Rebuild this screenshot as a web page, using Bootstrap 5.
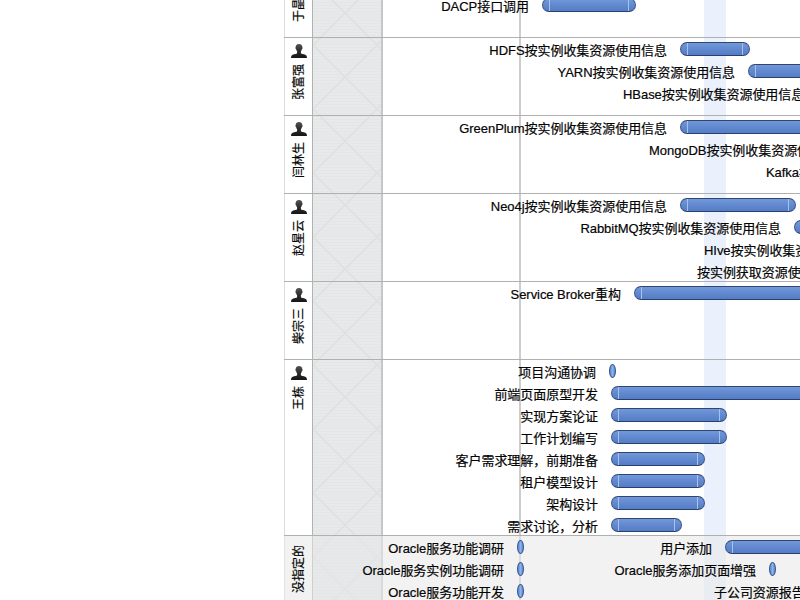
<!DOCTYPE html>
<html lang="zh-CN">
<head>
<meta charset="utf-8">
<meta name="viewport" content="width=device-width, initial-scale=1">
<title>资源甘特图</title>
<link href="https://cdn.jsdelivr.net/npm/bootstrap@5.3.0/dist/css/bootstrap.min.css" rel="stylesheet">
<style>
  body { width: 800px; height: 600px; background: #fff; color: #000; font: 13px/22px "Liberation Sans", "Noto Sans CJK SC", sans-serif; letter-spacing: -.05px; -webkit-text-stroke: .2px #111; }
  .gantt { width: 516px; height: 600px; margin-left: 284px; }
  /* column guides behind the rows */
  .guides { z-index: 0; }
  .g-names { width: 29px; border-left: 1px solid #dcdcdc; border-right: 1px solid #b2b2b2; }
  .g-off {
    width: 70px; border-right: 2px solid #c6c7c8;
    background:
      linear-gradient(45deg, transparent 48.5%, #dfe0e2 49.5%, #dfe0e2 50.5%, transparent 51.5%) 0 -19px / 64px 64px,
      linear-gradient(-45deg, transparent 48.5%, #dfe0e2 49.5%, #dfe0e2 50.5%, transparent 51.5%) 0 -19px / 64px 64px,
      repeating-linear-gradient(#e7e9ea 0 2px, #e3e5e6 2px 3px);
  }
  .g-line { width: 2px; margin-left: 136px; background: #cdcdcd; }
  .g-today { width: 22px; margin-left: 183px; background: #eaf1fd; }
  .group { z-index: 1; height: var(--h); box-shadow: inset 0 1px #b0b0b0; }
  .group-top { box-shadow: none; }
  .group-top .tasks { margin-top: -7px; }
  .group-none { background: rgba(232, 232, 232, .55); }
  .who { width: 30px; padding-top: 7px; }
  .who svg { width: 16px; height: 14px; }
  .who-name { writing-mode: vertical-rl; text-orientation: sideways; transform: rotate(180deg); font-size: 12px; line-height: 16px; margin-top: 6px; letter-spacing: 0; }
  .group-none .who-name { margin-top: 3px; }
  .group-top .who-name { margin-top: -9px; }
  .task { height: 22px; }
  .t-label { width: var(--w); height: 22px; padding-top: 3px; line-height: 22px; }
  .t-label.cut { width: auto; margin-left: var(--x); }
  .bar {
    width: var(--w); height: 14px; margin: 5px 0 0 13px; padding: 0 6px;
    border: 1px solid #36558c; border-top-color: #30466f; border-bottom-color: #293f6d; border-radius: 7px;
    background: linear-gradient(#7198da, #6289cf 50%, #547dc5);
  }
  .bar::before { content: ""; display: block; height: 12px; border: solid #a9c2eb; border-width: 0 1px; }
  .pin { width: 7px; height: 14px; margin: 5px 0 0 13px; border: 1px solid #36558c; border-radius: 50%; background: linear-gradient(90deg, #5b86d0, #8db2ec 50%, #5b86d0); }
</style>
<script src="https://cdn.jsdelivr.net/npm/bootstrap@5.3.0/dist/js/bootstrap.bundle.min.js"></script>
</head>
<body class="overflow-hidden">
<svg width="0" height="0" class="position-absolute">
  <linearGradient id="shade" x1="0" y1="0" x2="0" y2="1"><stop offset="0" stop-color="#555"/><stop offset=".5" stop-color="#2c2c2c"/><stop offset="1" stop-color="#161616"/></linearGradient>
  <symbol id="person" viewBox="0 0 16 14"><path fill="url(#shade)" d="M8 0C5.700 0 4.600 1.300 4.700 3.200c-.3 0-.3.500-.2 1 .1.600.4.900.6 1.100.2.900.6 1.500 1 2v1.900C5.500 10 3.600 10.100 1.700 10.700.6 11.100.1 12 0 14h16c-.1-2-.6-2.900-1.700-3.300-1.900-.6-3.800-.7-4.400-1.500V7.300c.4-.5.8-1.100 1-2 .2-.2.5-.5.6-1.100.1-.5.1-1-.2-1C11.400 1.300 10.300 0 8 0z"/></symbol>
</svg>
<main class="gantt position-relative overflow-hidden">
  <div class="guides d-flex position-absolute top-0 start-0 w-100 h-100">
    <div class="g-names flex-shrink-0"></div>
    <div class="g-off flex-shrink-0"></div>
    <div class="g-line flex-shrink-0"></div>
    <div class="g-today flex-shrink-0"></div>
  </div>

  <section class="group group-top d-flex position-relative" style="--h:37px">
    <div class="who flex-shrink-0 d-flex flex-column align-items-center"><span class="who-name">于晶</span></div>
    <div class="tasks">
      <div class="task d-flex"><div class="t-label flex-shrink-0 text-end text-nowrap" style="--w:215px">DACP接口调用</div><div class="bar flex-shrink-0" style="--w:94px"></div></div>
    </div>
  </section>

  <section class="group d-flex position-relative" style="--h:78px">
    <div class="who flex-shrink-0 d-flex flex-column align-items-center"><svg><use href="#person"/></svg><span class="who-name">张富强</span></div>
    <div class="tasks">
      <div class="task d-flex"><div class="t-label flex-shrink-0 text-end text-nowrap" style="--w:353px">HDFS按实例收集资源使用信息</div><div class="bar flex-shrink-0" style="--w:70px"></div></div>
      <div class="task d-flex"><div class="t-label flex-shrink-0 text-end text-nowrap" style="--w:421px">YARN按实例收集资源使用信息</div><div class="bar flex-shrink-0" style="--w:120px"></div></div>
      <div class="task d-flex"><div class="t-label cut text-nowrap" style="--x:309px">HBase按实例收集资源使用信息</div></div>
    </div>
  </section>

  <section class="group d-flex position-relative" style="--h:78px">
    <div class="who flex-shrink-0 d-flex flex-column align-items-center"><svg><use href="#person"/></svg><span class="who-name">闫林生</span></div>
    <div class="tasks">
      <div class="task d-flex"><div class="t-label flex-shrink-0 text-end text-nowrap" style="--w:353px">GreenPlum按实例收集资源使用信息</div><div class="bar flex-shrink-0" style="--w:180px"></div></div>
      <div class="task d-flex"><div class="t-label cut text-nowrap" style="--x:335px">MongoDB按实例收集资源使用信息</div></div>
      <div class="task d-flex"><div class="t-label cut text-nowrap" style="--x:452px">Kafka按实例收集资源使用信息</div></div>
    </div>
  </section>

  <section class="group d-flex position-relative" style="--h:88px">
    <div class="who flex-shrink-0 d-flex flex-column align-items-center"><svg><use href="#person"/></svg><span class="who-name">赵星云</span></div>
    <div class="tasks">
      <div class="task d-flex"><div class="t-label flex-shrink-0 text-end text-nowrap" style="--w:353px">Neo4j按实例收集资源使用信息</div><div class="bar flex-shrink-0" style="--w:116px"></div></div>
      <div class="task d-flex"><div class="t-label flex-shrink-0 text-end text-nowrap" style="--w:467px">RabbitMQ按实例收集资源使用信息</div><div class="bar flex-shrink-0" style="--w:90px"></div></div>
      <div class="task d-flex"><div class="t-label cut text-nowrap" style="--x:390px">HIve按实例收集资源使用信息</div></div>
      <div class="task d-flex"><div class="t-label cut text-nowrap" style="--x:383px">按实例获取资源使用信息</div></div>
    </div>
  </section>

  <section class="group d-flex position-relative" style="--h:78px">
    <div class="who flex-shrink-0 d-flex flex-column align-items-center"><svg><use href="#person"/></svg><span class="who-name">柴宗三</span></div>
    <div class="tasks">
      <div class="task d-flex"><div class="t-label flex-shrink-0 text-end text-nowrap" style="--w:307px">Service Broker重构</div><div class="bar flex-shrink-0" style="--w:220px"></div></div>
    </div>
  </section>

  <section class="group d-flex position-relative" style="--h:176px">
    <div class="who flex-shrink-0 d-flex flex-column align-items-center"><svg><use href="#person"/></svg><span class="who-name">王栋</span></div>
    <div class="tasks">
      <div class="task d-flex"><div class="t-label flex-shrink-0 text-end text-nowrap" style="--w:282px">项目沟通协调</div><div class="pin flex-shrink-0"></div></div>
      <div class="task d-flex"><div class="t-label flex-shrink-0 text-end text-nowrap" style="--w:284px">前端页面原型开发</div><div class="bar flex-shrink-0" style="--w:240px"></div></div>
      <div class="task d-flex"><div class="t-label flex-shrink-0 text-end text-nowrap" style="--w:284px">实现方案论证</div><div class="bar flex-shrink-0" style="--w:116px"></div></div>
      <div class="task d-flex"><div class="t-label flex-shrink-0 text-end text-nowrap" style="--w:284px">工作计划编写</div><div class="bar flex-shrink-0" style="--w:116px"></div></div>
      <div class="task d-flex"><div class="t-label flex-shrink-0 text-end text-nowrap" style="--w:284px">客户需求理解，前期准备</div><div class="bar flex-shrink-0" style="--w:94px"></div></div>
      <div class="task d-flex"><div class="t-label flex-shrink-0 text-end text-nowrap" style="--w:284px">租户模型设计</div><div class="bar flex-shrink-0" style="--w:94px"></div></div>
      <div class="task d-flex"><div class="t-label flex-shrink-0 text-end text-nowrap" style="--w:284px">架构设计</div><div class="bar flex-shrink-0" style="--w:94px"></div></div>
      <div class="task d-flex"><div class="t-label flex-shrink-0 text-end text-nowrap" style="--w:284px">需求讨论，分析</div><div class="bar flex-shrink-0" style="--w:71px"></div></div>
    </div>
  </section>

  <section class="group group-none d-flex position-relative" style="--h:65px">
    <div class="who flex-shrink-0 d-flex flex-column align-items-center"><span class="who-name">没指定的</span></div>
    <div class="tasks">
      <div class="task d-flex"><div class="t-label flex-shrink-0 text-end text-nowrap" style="--w:190px">Oracle服务功能调研</div><div class="pin flex-shrink-0"></div><div class="t-label flex-shrink-0 text-end text-nowrap" style="--w:188px">用户添加</div><div class="bar flex-shrink-0" style="--w:140px"></div></div>
      <div class="task d-flex"><div class="t-label flex-shrink-0 text-end text-nowrap" style="--w:190px">Oracle服务实例功能调研</div><div class="pin flex-shrink-0"></div><div class="t-label flex-shrink-0 text-end text-nowrap" style="--w:232px">Oracle服务添加页面增强</div><div class="pin flex-shrink-0"></div></div>
      <div class="task d-flex"><div class="t-label flex-shrink-0 text-end text-nowrap" style="--w:190px">Oracle服务功能开发</div><div class="pin flex-shrink-0"></div><div class="t-label cut text-nowrap" style="--x:190px">子公司资源报告</div></div>
    </div>
  </section>
</main>
</body>
</html>
